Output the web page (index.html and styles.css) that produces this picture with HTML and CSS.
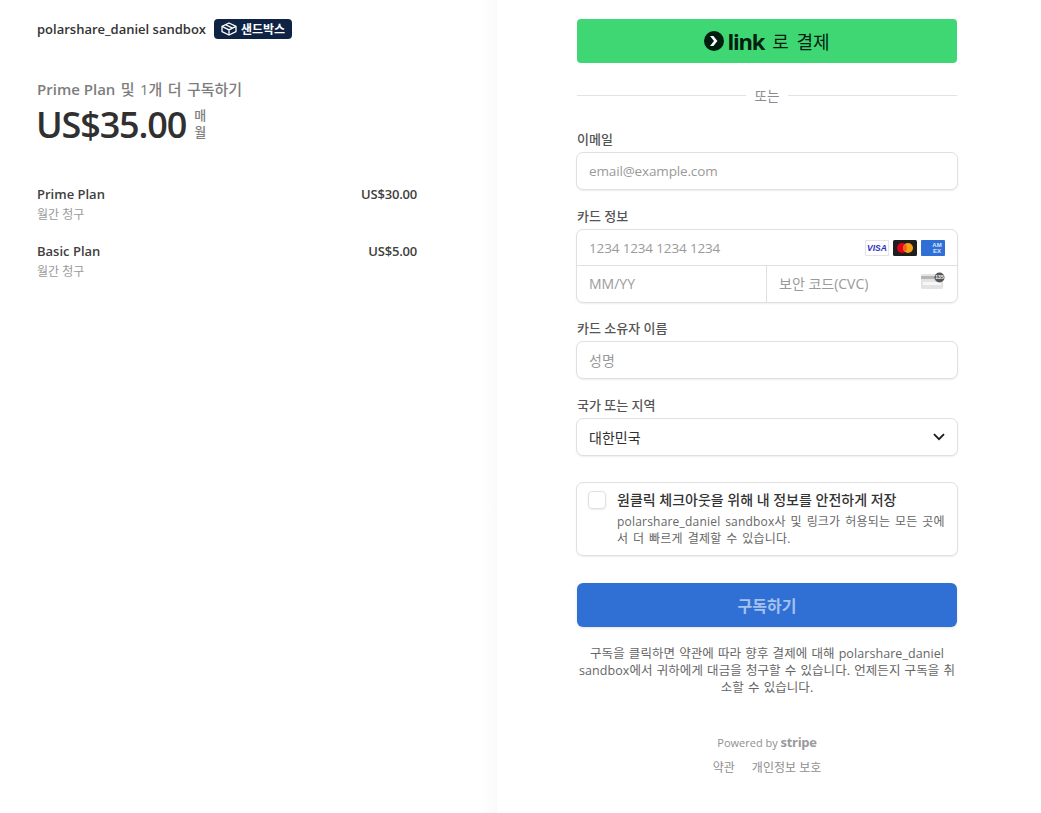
FILE: index.html
```html
<!DOCTYPE html>
<html lang="ko">
<head>
  <meta charset="UTF-8" />
  <title>구독하기</title>
  <link rel="stylesheet" href="styles.css">
</head>
<body>
  <div class="checkout">
    <aside class="summary">
      <div class="merchant">
        <span class="merchant-name">polarshare_daniel sandbox</span>
        <span class="sandbox-badge">
          <svg width="16" height="14" viewBox="0 0 16 14" fill="none" stroke="#fff" stroke-width="1.3" stroke-linejoin="round">
            <path d="M8 1 15 4.4v5.2L8 13 1 9.6V4.4z" />
            <path d="M1 4.4 8 7.8l7-3.4M8 7.8V13M4.5 2.7l7 3.4" />
          </svg>
          샌드박스
        </span>
      </div>
      <div class="plan-title"><span class="plan-name">Prime Plan</span> 및 1개 더 구독하기</div>
      <div class="price-row">
        <span class="price">US$35.00</span>
        <span class="price-period">매<br>월</span>
      </div>
      <ul class="items">
        <li class="item">
          <div class="item-main"><span>Prime Plan</span><span class="item-price">US$30.00</span></div>
          <div class="item-sub">월간 청구</div>
        </li>
        <li class="item">
          <div class="item-main"><span>Basic Plan</span><span class="item-price">US$5.00</span></div>
          <div class="item-sub">월간 청구</div>
        </li>
      </ul>
    </aside>

    <main class="pay">
      <button class="link-btn" type="button">
        <svg width="20" height="20" viewBox="0 0 20 20">
          <circle cx="10" cy="10" r="10" fill="#011e0f" />
          <path d="M6 5h3.4l4 5-4 5H6l4-5z" fill="#fff" />
        </svg>
        <span class="link-word">link</span>
        <span class="link-text">로 결제</span>
      </button>

      <div class="divider"><span>또는</span></div>

      <label class="field-label first">이메일</label>
      <div class="box input-row placeholder latin-input">email@example.com</div>

      <label class="field-label">카드 정보</label>
      <div class="box card-box">
        <div class="card-number placeholder">
          <span class="latin-input">1234 1234 1234 1234</span>
          <span class="brands">
            <svg width="24" height="16" viewBox="0 0 24 16">
              <rect x="0.5" y="0.5" width="23" height="15" fill="#fff" stroke="#e3e3e8" />
              <text x="12" y="11" text-anchor="middle" class="visa-text">VISA</text>
            </svg>
            <svg width="24" height="16" viewBox="0 0 24 16">
              <rect width="24" height="16" rx="1.5" fill="#1f1f1f" />
              <circle cx="9" cy="8" r="5" fill="#e6001f" />
              <circle cx="15" cy="8" r="5" fill="#f79e1b" />
              <path d="M12 4a5 5 0 0 1 0 8 5 5 0 0 1 0-8z" fill="#f2660f" />
            </svg>
            <svg width="24" height="16" viewBox="0 0 24 16">
              <rect width="24" height="16" rx="1" fill="#2f6fd6" />
              <text x="16" y="7.2" text-anchor="middle" class="amex-text">AM</text>
              <text x="16" y="13" text-anchor="middle" class="amex-text">EX</text>
            </svg>
          </span>
        </div>
        <div class="card-bottom placeholder">
          <div class="card-exp">MM/YY</div>
          <div class="card-cvc">
            <span>보안 코드(CVC)</span>
            <svg class="cvc-icon" width="24" height="18" viewBox="0 0 24 18">
              <rect x="0" y="3" width="22" height="15" rx="1.5" fill="#e3e3e3" />
              <rect x="0" y="5" width="22" height="3" fill="#b5b5b5" />
              <rect x="2" y="11" width="18" height="3" fill="#f7f7f7" />
              <circle cx="18.5" cy="6.5" r="5" fill="#555" />
              <text x="18.5" y="8.4" text-anchor="middle" class="cvc-text">135</text>
            </svg>
          </div>
        </div>
      </div>

      <label class="field-label after-card">카드 소유자 이름</label>
      <div class="box input-row placeholder">성명</div>

      <label class="field-label">국가 또는 지역</label>
      <div class="box input-row select-row">
        <span>대한민국</span>
        <svg width="12" height="8" viewBox="0 0 12 8" fill="none" stroke="#1a1a1a" stroke-width="1.8">
          <path d="M1 1.2 6 6.2l5-5" />
        </svg>
      </div>

      <div class="box save-box">
        <span class="checkbox"></span>
        <div class="save-copy">
          <div class="save-title">원클릭 체크아웃을 위해 내 정보를 안전하게 저장</div>
          <div class="save-desc">polarshare_daniel sandbox사 및 링크가 허용되는 모든 곳에서 더 빠르게 결제할 수 있습니다.</div>
        </div>
      </div>

      <button class="submit-btn" type="button">구독하기</button>

      <p class="terms">구독을 클릭하면 약관에 따라 향후 결제에 대해 polarshare_daniel sandbox에서 귀하에게 대금을 청구할 수 있습니다. 언제든지 구독을 취소할 수 있습니다.</p>

      <footer class="foot">
        <div class="powered">Powered by <b>stripe</b></div>
        <div class="foot-links"><span>약관</span><span>개인정보 보호</span></div>
      </footer>
    </main>
  </div>
</body>
</html>
```

FILE: styles.css
```css
html, body {
  margin: 0;
  padding: 0;
  height: 100%;
  background: #fff;
  color: #303030;
  font-family: "Open Sans", "Noto Sans CJK KR", sans-serif;
  overflow: hidden;
}

.checkout {
  display: flex;
  height: 813px;
}

/* left column */
.summary {
  width: 497px;
  flex: none;
  box-sizing: border-box;
  padding: 19px 80px 0 37px;
  background: linear-gradient(to right, #fff 480px, #fafafa 497px);
}

.merchant {
  display: flex;
  align-items: center;
  gap: 8px;
  height: 20px;
}

.merchant-name {
  font-size: 13px;
  font-weight: 600;
  color: #333;
}

.sandbox-badge {
  display: flex;
  align-items: center;
  gap: 4px;
  height: 20px;
  padding: 0 7px;
  border-radius: 4px;
  background: #0f2445;
  color: #fff;
  font-size: 12px;
  font-weight: 700;
}

.plan-title {
  margin-top: 40px;
  font-size: 15px;
  line-height: 20px;
  font-weight: 500;
  word-spacing: 1.5px;
  color: #7d7d7d;
}

.plan-name {
  font-weight: 600;
  word-spacing: 0;
}

.price-row {
  display: flex;
  align-items: center;
  gap: 8px;
  margin-top: 8px;
  height: 36px;
}

.price {
  margin-left: -1px;
  font-size: 36px;
  line-height: 36px;
  font-weight: 600;
  letter-spacing: -1.15px;
  color: #303030;
}

.price-period {
  margin-top: -3px;
  font-size: 13px;
  line-height: 17px;
  font-weight: 500;
  color: #7d7d7d;
}

.items {
  list-style: none;
  margin: 42px 0 0;
  padding: 0;
}

.item {
  margin-bottom: 19px;
}

.item-main {
  display: flex;
  justify-content: space-between;
  font-size: 13px;
  line-height: 19px;
  font-weight: 600;
  color: #404040;
}

.item-price {
  letter-spacing: -0.2px;
}

.item-sub {
  margin-top: 2px;
  font-size: 12px;
  line-height: 17px;
  color: #9a9a9a;
}

/* right column */
.pay {
  width: 380px;
  margin-left: 80px;
  padding-top: 19px;
}

.link-btn {
  display: flex;
  align-items: center;
  justify-content: center;
  gap: 3px;
  width: 100%;
  height: 44px;
  border: 0;
  border-radius: 4px;
  background: #3fd773;
  color: #011e0f;
  font-family: inherit;
}

.link-word {
  font-size: 22px;
  font-weight: 700;
  letter-spacing: -1.2px;
}

.link-text {
  margin-left: 5px;
  font-size: 18px;
  word-spacing: 3px;
}

.divider {
  display: flex;
  align-items: center;
  gap: 8.5px;
  margin-top: 23px;
  height: 18px;
  font-size: 13.5px;
  color: #8a8a90;
}

.divider::before,
.divider::after {
  content: "";
  flex: 1;
  height: 1px;
  background: #e3e3e6;
}

.field-label {
  display: block;
  margin: 17px 0 4px;
  font-size: 13px;
  line-height: 18px;
  font-weight: 500;
  color: #555;
}

.field-label.first {
  margin-top: 26px;
}

.field-label.after-card {
  margin-top: 16px;
}

/* boxes stick out 1px past the buttons */
.box {
  box-sizing: border-box;
  margin-left: -1px;
  margin-right: -1px;
  background: #fff;
  border: 1px solid #e0e0e0;
  border-radius: 7px;
  box-shadow: 0 1px 2px rgba(0, 0, 0, 0.07);
}

.input-row {
  display: flex;
  align-items: center;
  height: 38px;
  padding: 0 12px;
  font-size: 14px;
}

.placeholder {
  color: #9a9a9a;
}

.latin-input {
  font-size: 13.5px;
  letter-spacing: -0.15px;
}

.card-box {
  height: 74px;
  font-size: 14px;
}

.card-number {
  display: flex;
  align-items: center;
  justify-content: space-between;
  height: 35px;
  padding: 0 12px;
  border-bottom: 1px solid #e0e0e0;
}

.brands {
  display: flex;
  gap: 4px;
}

.visa-text {
  font-family: "Liberation Sans", sans-serif;
  font-size: 8.5px;
  font-weight: 700;
  font-style: italic;
  fill: #2a30c0;
}

.amex-text {
  font-family: "Liberation Sans", sans-serif;
  font-size: 6px;
  font-weight: 700;
  fill: #dbe7fb;
}

.card-bottom {
  display: flex;
  height: 36px;
}

.card-exp {
  display: flex;
  align-items: center;
  width: 190px;
  box-sizing: border-box;
  padding: 0 0 2px 12px;
  border-right: 1px solid #e0e0e0;
}

.card-cvc {
  flex: 1;
  display: flex;
  align-items: center;
  justify-content: space-between;
  padding: 0 12px 2px;
}

.cvc-icon {
  align-self: flex-start;
  margin-top: 5px;
}

.cvc-text {
  font-family: "Liberation Sans", sans-serif;
  font-size: 5px;
  font-weight: 700;
  fill: #fff;
}

.select-row {
  justify-content: space-between;
  color: #303030;
}

.save-box {
  display: flex;
  gap: 11px;
  height: 74px;
  margin-top: 26px;
  padding: 8px 11px;
}

.checkbox {
  flex: none;
  width: 16px;
  height: 16px;
  border: 1px solid #e0e0e0;
  border-radius: 4px;
  box-shadow: 0 1px 2px rgba(0, 0, 0, 0.08);
}

.save-title {
  font-size: 14px;
  line-height: 18px;
  font-weight: 500;
  color: #333;
}

.save-desc {
  margin-top: 4px;
  font-size: 12px;
  line-height: 17px;
  letter-spacing: 0.2px;
  word-spacing: 1.5px;
  color: #666;
}

.submit-btn {
  display: block;
  width: 100%;
  height: 44px;
  margin-top: 27px;
  border: 0;
  border-radius: 6px;
  background: #3070d4;
  color: #a5c2ee;
  font-family: inherit;
  font-size: 16px;
  font-weight: 600;
  box-shadow: 0 1px 3px rgba(0, 0, 0, 0.12);
}

.terms {
  margin: 18px 0 0;
  font-size: 12.5px;
  line-height: 17px;
  letter-spacing: 0.07px;
  word-spacing: 0.8px;
  text-align: center;
  color: #666;
}

.foot {
  margin-top: 38px;
  text-align: center;
  font-size: 11px;
  color: #8f8f8f;
}

.powered {
  line-height: 17px;
}

.powered b {
  font-size: 13px;
  letter-spacing: -0.3px;
  color: #9a9a9a;
}

.foot-links {
  display: flex;
  justify-content: center;
  gap: 17px;
  margin-top: 8px;
  font-size: 12px;
  line-height: 17px;
}
```
